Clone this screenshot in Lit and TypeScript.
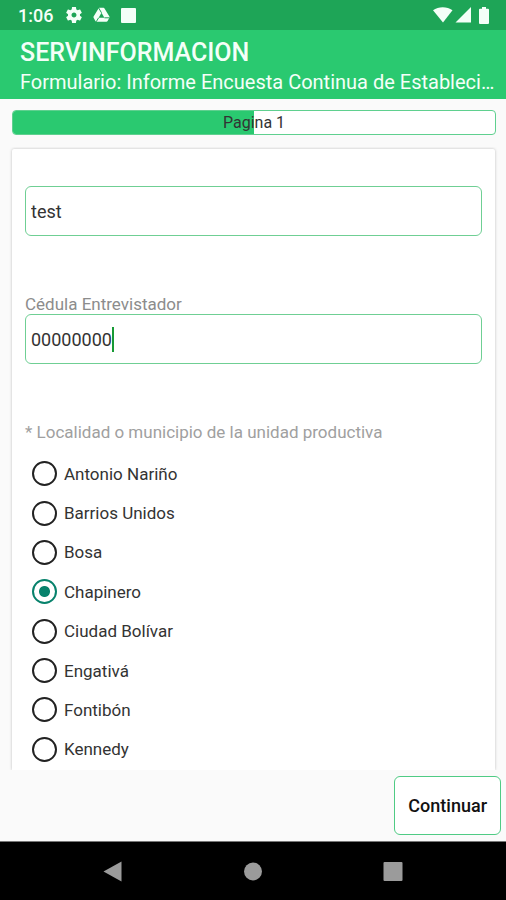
import { LitElement, html, css, svg } from "lit";
import { customElement, state } from "lit/decorators.js";

@customElement("status-bar")
class StatusBar extends LitElement {
  static styles = css`
    :host {
      display: flex;
      align-items: center;
      flex: none;
      box-sizing: border-box;
      height: 30px;
      padding: 0 17px 0 18px;
      background: #1ea557;
      color: #f4fff8;
      font-size: 18px;
      font-weight: 500;
    }
    .time { width: 48px; }
    .left { display: flex; gap: 11px; align-items: center; flex: 1; }
    .right { display: flex; align-items: center; }
    svg { display: block; fill: #f4fff8; }
  `;

  render() {
    return html`
      <span class="time">1:06</span>
      <span class="left">
        <svg width="16" height="16" viewBox="2 2 20 20" aria-hidden="true">
          <path d="M19.43 12.98c.04-.32.07-.64.07-.98s-.03-.66-.07-.98l2.11-1.65c.19-.15.24-.42.12-.64l-2-3.46c-.12-.22-.39-.3-.61-.22l-2.49 1c-.52-.4-1.08-.73-1.69-.98l-.38-2.65C14.46 2.18 14.25 2 14 2h-4c-.25 0-.46.18-.49.42l-.38 2.65c-.61.25-1.17.59-1.69.98l-2.49-1c-.23-.09-.49 0-.61.22l-2 3.46c-.13.22-.07.49.12.64l2.11 1.65c-.04.32-.07.65-.07.98s.03.66.07.98l-2.11 1.65c-.19.15-.24.42-.12.64l2 3.46c.12.22.39.3.61.22l2.49-1c.52.4 1.08.73 1.69.98l.38 2.65c.03.24.24.42.49.42h4c.25 0 .46-.18.49-.42l.38-2.65c.61-.25 1.17-.59 1.69-.98l2.49 1c.23.09.49 0 .61-.22l2-3.46c.12-.22.07-.49-.12-.64l-2.11-1.65zM12 15.100c-1.710 0-3.100-1.390-3.100-3.100s1.390-3.100 3.100-3.100 3.100 1.390 3.100 3.100-1.390 3.100-3.100 3.100z"/>
        </svg>
        <svg width="17" height="16" viewBox="0 0 17 16" aria-hidden="true">
          <path fill-rule="evenodd" d="M6.500 .8h4q.6 0 1 .6l4.900 8.200q.3.600 0 1.200l-1.800 3.200q-.4.700-1.200.7H3.600q-.8 0-1.200-.7L.6 10.800q-.3-.6 0-1.200L5.500 1.400q.4-.6 1-.6zM8.500 5.800L5.600 10.800H11.400z"/>
          <path d="M5.600 10.800L3.200 14.800M8.500 5.800L5.700 1M11.400 10.800H16.500" stroke="#1ea557" stroke-width="1"/>
        </svg>
        <svg width="15" height="15" viewBox="0 0 15 15" aria-hidden="true">
          <rect width="15" height="15" rx="1"/>
        </svg>
      </span>
      <span class="right">
        <svg width="20" height="16" viewBox="0 0 20 16" aria-hidden="true">
          <path d="M0 3.200C5.500-.9 14-.9 19.500 3.200L10 15.500z"/>
        </svg>
        <svg width="26" height="16" viewBox="0 0 26 16" aria-hidden="true">
          <path d="M2.500 15.500L18 0v15.500z"/>
        </svg>
        <svg width="10" height="17" viewBox="0 0 10 17" aria-hidden="true">
          <path d="M3 0h4v1.800h2q1 0 1 1v13.200q0 1-1 1H1q-1 0-1-1V2.800q0-1 1-1h2z"/>
        </svg>
      </span>
    `;
  }
}

@customElement("system-nav")
class SystemNav extends LitElement {
  static styles = css`
    :host {
      display: flex;
      align-items: center;
      justify-content: center;
      gap: 80px;
      flex: none;
      box-sizing: border-box;
      height: 59px;
      border-top: 1px solid #777;
      background: #000;
    }
    button {
      display: flex;
      align-items: center;
      justify-content: center;
      width: 60px;
      height: 48px;
      padding: 0;
      border: 0;
      background: none;
    }
    svg { display: block; fill: #9b9b9b; }
  `;

  render() {
    const shapes = [
      { label: "Atrás", shape: svg`<path d="M.5 10.500L18.500 .5V20.500z"/>` },
      { label: "Inicio", shape: svg`<circle cx="10" cy="10.500" r="9"/>` },
      { label: "Recientes", shape: svg`<rect x=".5" y="1" width="19" height="19" rx="1"/>` },
    ];
    return shapes.map(
      (s) => html`<button type="button" aria-label=${s.label}>
        <svg width="20" height="21" viewBox="0 0 20 21">${s.shape}</svg>
      </button>`,
    );
  }
}

@customElement("app-root")
class AppRoot extends LitElement {
  static styles = css`
    :host {
      display: flex;
      flex-direction: column;
      height: 100vh;
      background: #fafafa;
      color: #333;
      font-family: Roboto, "Liberation Sans", sans-serif;
      font-size: 18px;
    }
    header {
      flex: none;
      padding: 8px 10px 3px 20px;
      background: #2ac970;
      color: #f4fff8;
    }
    h1 {
      margin: 0;
      font-size: 25px;
      line-height: 30px;
      font-weight: 500;
    }
    .subtitle {
      margin: 0;
      font-size: 20px;
      line-height: 28px;
      overflow: hidden;
      white-space: nowrap;
      text-overflow: ellipsis;
    }
    main {
      display: flex;
      flex-direction: column;
      flex: 1;
      min-height: 0;
      padding: 11px 10px 0 12px;
    }
    .progress {
      position: relative;
      flex: none;
      height: 23px;
      border: 1px solid #5fd08f;
      border-radius: 4px;
      background: #fff;
      overflow: hidden;
    }
    .fill { height: 100%; background: #2ac970; }
    .progress-text {
      position: absolute;
      inset: 0;
      text-align: center;
      font-size: 16px;
      line-height: 23px;
    }
    .scroll {
      flex: 1;
      min-height: 0;
      margin: 12px -10px 0 -12px;
      padding: 2px 11px 0 12px;
      overflow: hidden auto;
      scrollbar-width: none;
    }
    .card {
      box-sizing: border-box;
      min-height: 100%;
      padding: 19px 13px 0;
      background: #fff;
      border-radius: 2px 2px 0 0;
      box-shadow: 0 0 3px rgba(0, 0, 0, 0.25);
    }
    label, legend { font-size: 17px; line-height: 20px; }
    .label {
      display: block;
      height: 20px;
      padding: 0;
      color: #8c8c8c;
    }
    .field { display: block; margin-bottom: 58px; }
    .field.first { padding-top: 18px; }
    .box { display: block; position: relative; }
    .text {
      display: block;
      box-sizing: border-box;
      width: 100%;
      height: 50px;
      padding: 0 5px;
      border: 1px solid #6fcf94;
      border-radius: 6px;
      outline: 0;
      background: #fff;
      color: #333;
      font: inherit;
      font-size: 18px;
    }
    .cursor {
      position: absolute;
      inset: 0;
      display: flex;
      align-items: center;
      padding-left: 6px;
      font-size: 18px;
      pointer-events: none;
    }
    .ghost { visibility: hidden; }
    .caret { width: 2px; height: 25px; background: #179a35; }
    fieldset { min-width: 0; margin: 0; padding: 0; border: 0; }
    legend { margin-bottom: 12px; }
    .required { color: #a0a0a0; }
    .options {
      display: grid;
      grid-auto-rows: 1fr;
      height: 315px;
      padding-left: 7px;
    }
    .option {
      display: flex;
      align-items: center;
      gap: 7px;
    }
    .radio {
      appearance: none;
      box-sizing: border-box;
      width: 25px;
      height: 25px;
      margin: 0;
      border: 2px solid #222;
      border-radius: 50%;
      background: #fff;
    }
    .radio:checked {
      border-color: #07826c;
      background: radial-gradient(circle, #07826c 5px, #fff 6px);
    }
    footer {
      display: flex;
      justify-content: flex-end;
      flex: none;
      padding: 6px 5px;
    }
    .next {
      height: 59px;
      padding: 0 13px;
      border: 1px solid #4fcb84;
      border-radius: 6px;
      background: #fff;
      color: #111;
      font: inherit;
      font-weight: 500;
    }
  `;

  @state() private selected = "Chapinero";
  @state() private name = "test";
  @state() private idNumber = "00000000";

  private progress = 50;
  private places = [
    "Antonio Nariño",
    "Barrios Unidos",
    "Bosa",
    "Chapinero",
    "Ciudad Bolívar",
    "Engativá",
    "Fontibón",
    "Kennedy",
  ];

  render() {
    return html`
      <status-bar></status-bar>
      <header>
        <h1>SERVINFORMACION</h1>
        <p class="subtitle">Formulario: Informe Encuesta Continua de Estableci…</p>
      </header>
      <main>
        <div class="progress" role="progressbar" aria-label="Pagina 1" aria-valuenow=${this.progress}>
          <div class="fill" style="width:${this.progress}%"></div>
          <span class="progress-text">Pagina 1</span>
        </div>
        <div class="scroll">
          <form class="card">
            <div class="field first">
              <input class="text" aria-label="Nombre" .value=${this.name}
                @input=${(e: Event) => (this.name = (e.target as HTMLInputElement).value)} />
            </div>
            <div class="field">
              <label class="label" for="cedula">Cédula Entrevistador</label>
              <span class="box">
                <input id="cedula" class="text" inputmode="numeric" .value=${this.idNumber}
                  @input=${(e: Event) => (this.idNumber = (e.target as HTMLInputElement).value)} />
                <span class="cursor" aria-hidden="true"><span class="ghost">${this.idNumber}</span><span class="caret"></span></span>
              </span>
            </div>
            <fieldset>
              <legend class="label required">* Localidad o municipio de la unidad productiva</legend>
              <div class="options">
                ${this.places.map(
                  (p) => html`<label class="option">
                    <input class="radio" type="radio" name="place" .checked=${this.selected === p}
                      @change=${() => (this.selected = p)} />
                    ${p}
                  </label>`,
                )}
              </div>
            </fieldset>
          </form>
        </div>
      </main>
      <footer><button class="next" type="button">Continuar</button></footer>
      <system-nav></system-nav>
    `;
  }
}
